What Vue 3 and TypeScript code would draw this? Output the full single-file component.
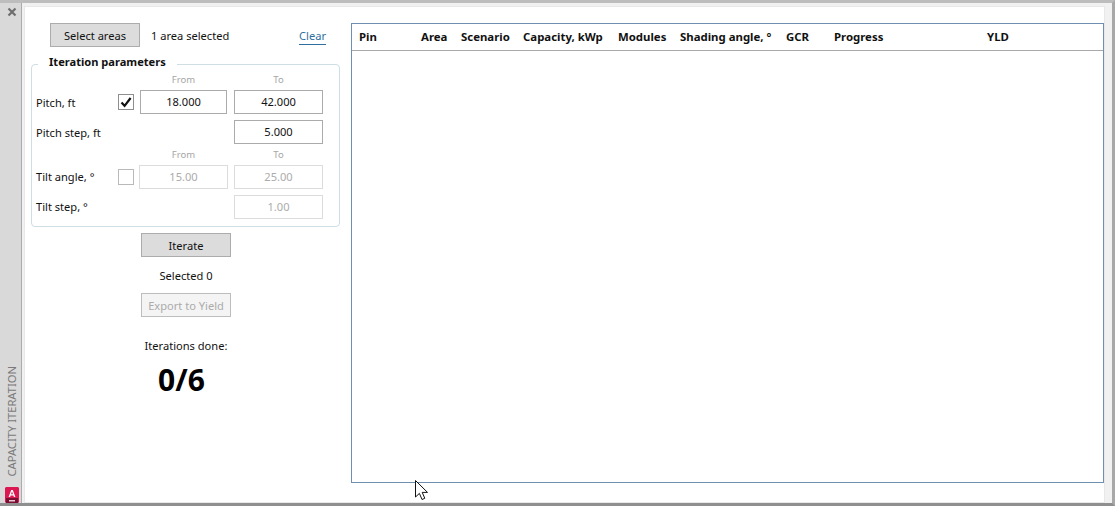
<script setup lang="ts">
const columns = [
  { label: 'Pin', width: 62 },
  { label: 'Area', width: 40 },
  { label: 'Scenario', width: 62 },
  { label: 'Capacity, kWp', width: 95 },
  { label: 'Modules', width: 62 },
  { label: 'Shading angle, °', width: 106 },
  { label: 'GCR', width: 48 },
  { label: 'Progress', width: 153 },
  { label: 'YLD', width: 60 },
]
</script>

<template>
  <div class="window">
    <aside class="strip">
      <svg class="close" viewBox="0 0 10 10" width="10" height="10">
        <path d="M1.5 1.5 8.5 8.5M8.5 1.5 1.5 8.5" stroke="#6e6e6e" stroke-width="2.2" fill="none" />
      </svg>
      <div class="caption">CAPACITY ITERATION</div>
      <svg class="logo" viewBox="0 0 14 16" width="14" height="16">
        <path d="M1 0H13L14 1V15L13 16H1L0 15V1Z" fill="#dc1650" />
        <rect x="1" y="11" width="12" height="5" fill="#7a0f33" />
        <path d="M3.6 10 6.2 3H7.8L10.4 10H8.9L8.4 8.4H5.6L5.1 10ZM6 7.2H8L7 4.6Z" fill="#fff" />
        <rect x="4" y="13" width="6" height="1.5" fill="#e9c4cf" />
      </svg>
    </aside>

    <main class="content">
      <section class="controls">
        <div class="select-row">
          <button class="btn select-btn">Select areas</button>
          <span class="selected-text">1 area selected</span>
          <a class="clear">Clear</a>
        </div>

        <fieldset class="params">
          <legend>Iteration parameters</legend>
          <div class="grid">
            <span></span><span></span>
            <span class="hint from">From</span><span class="hint">To</span>

            <label class="raised">Pitch, ft</label>
            <span class="check"><svg viewBox="0 0 14 14" width="14" height="14"><path d="M2.5 7.5 5.6 10.8 11.6 3" stroke="#111" stroke-width="2.2" fill="none" /></svg></span>
            <div class="field">18.000</div>
            <div class="field">42.000</div>

            <label class="raised">Pitch step, ft</label>
            <span></span><span></span>
            <div class="field">5.000</div>

            <span></span><span></span>
            <span class="hint from">From</span><span class="hint">To</span>

            <label>Tilt angle, °</label>
            <span class="check off"></span>
            <div class="field off wide">15.00</div>
            <div class="field off">25.00</div>

            <label>Tilt step, °</label>
            <span></span><span></span>
            <div class="field off">1.00</div>
          </div>
        </fieldset>

        <div class="actions">
          <button class="btn">Iterate</button>
          <p class="selected-count">Selected 0</p>
          <button class="btn disabled">Export to Yield</button>
          <p class="done-label">Iterations done:</p>
          <p class="done-value">0/6</p>
        </div>
      </section>

      <section class="table">
        <header class="thead">
          <span v-for="c in columns" :key="c.label" class="th" :style="{ width: c.width + 'px' }">{{ c.label }}</span>
        </header>
      </section>
    </main>

    <svg class="cursor" viewBox="0 0 14 21" width="14" height="21">
      <path d="M.5 .5V17L4.4 13.4 7 19.5 9.8 18.3 7.2 12.4H12.5Z" fill="#fff" stroke="#111" stroke-width="1" />
    </svg>
  </div>
</template>

<style>
html, body { margin: 0; background: #fff; overflow: hidden; }
</style>

<style scoped>
.window {
  position: relative;
  width: 1115px;
  height: 506px;
  box-sizing: border-box;
  display: flex;
  background: #f1f1f1;
  border-top: 3px solid #bdbdbd;
  border-bottom: 3px solid #8f8f8f;
  border-right: 3px solid #a8a8a8;
  font-family: "Noto Sans", sans-serif;
  font-size: 11.1px;
  color: #111;
}
.strip {
  width: 22px;
  flex: none;
  box-sizing: border-box;
  background: #d9d9d9;
  border-right: 1px solid #ababab;
  display: flex;
  flex-direction: column;
  align-items: center;
  padding: 4px 0 0 3px;
}
.close { margin-bottom: auto; }
.caption {
  writing-mode: vertical-rl;
  transform: rotate(180deg);
  color: #7a7a7a;
  font-size: 11.2px;
  line-height: 16px;
  margin-bottom: 11px;
}
.logo { display: block; }
.content {
  flex: 1;
  display: flex;
  margin: 3px 7px 0 2px;
  border: 1px solid #e8e8e8;
  background: #fff;
  box-sizing: border-box;
  padding: 16px 0 19px 6px;
}
.controls { width: 320px; flex: none; }
.select-row {
  display: flex;
  align-items: center;
  height: 24px;
  padding-left: 19px;
}
.btn {
  display: block;
  width: 90px;
  height: 24px;
  padding: 0;
  box-sizing: border-box;
  background: #dcdcdc;
  border: 1px solid #acacac;
  font: inherit;
  color: #111;
}
.selected-text { margin-left: 11px; }
.clear {
  margin-left: auto;
  margin-right: 25px;
  color: #2f6f9f;
  border-bottom: 1px solid #2f6f9f;
  line-height: 15px;
  padding: 2px 0 1px;
}
.params {
  margin: 7px 0 0;
  padding: 0;
  width: 309px;
  height: 173px;
  box-sizing: border-box;
  border: 1px solid #cfdde4;
  border-radius: 4px;
}
legend {
  margin-left: 6px;
  padding: 0 11px 4px;
  font-weight: 700;
  font-size: 11.1px;
  line-height: 16px;
}
.grid {
  display: grid;
  grid-template-columns: 82px 22px 94px 89px;
  grid-auto-rows: min-content;
  padding: 1px 0 0 4px;
  align-items: center;
}
.grid label { line-height: 24px; margin-bottom: 6px; }
.grid label.raised { padding-top: 1px; line-height: 23px; margin-bottom: 6px; }
.hint {
  color: #a6a6a6;
  font-size: 9.5px;
  text-align: center;
  line-height: 14px;
  height: 14px;
  margin-top: -2px;
  margin-bottom: 3px;
}
.hint.from { width: 87px; }
.check {
  width: 16px;
  height: 16px;
  box-sizing: border-box;
  border: 1px solid #8f8f8f;
  display: flex;
  align-items: center;
  justify-content: center;
}
.check.off { border-color: #b9b9b9; }
.field {
  box-sizing: border-box;
  width: 87px;
  height: 24px;
  line-height: 22px;
  margin-bottom: 6px;
  text-align: center;
  border: 1px solid #ababab;
  background: #fff;
}
.grid > .field:nth-child(4n) { width: 89px; }
.grid > .field.wide { width: 89px; margin-left: -1px; }
.grid .check { margin-bottom: 6px; }
.field.off { color: #ababab; border-color: #dcdcdc; }
.actions {
  display: flex;
  flex-direction: column;
  align-items: center;
  width: 310px;
  margin-top: 6px;
}
.actions p { margin: 0; }
.selected-count { line-height: 16px; margin-top: 11px !important; }
.actions .disabled {
  margin-top: 9px;
  background: #f4f4f4;
  border-color: #bdbdbd;
  color: #ababab;
}
.done-label { margin-top: 21px !important; line-height: 16px; }
.done-value { font-size: 30px; font-weight: 700; line-height: 40px; margin-top: 6px !important; padding-right: 9px; color: #000; }
.table {
  flex: 1;
  box-sizing: border-box;
  border: 1px solid #6f8fb0;
}
.thead {
  display: flex;
  height: 27px;
  box-sizing: border-box;
  align-items: center;
  padding: 0 0 2px 7px;
  border-bottom: 1px solid #a9a9a9;
  font-weight: 700;
  font-size: 11.4px;
}
.th { flex: none; white-space: nowrap; }
.cursor { position: absolute; left: 415px; top: 477px; }
</style>
